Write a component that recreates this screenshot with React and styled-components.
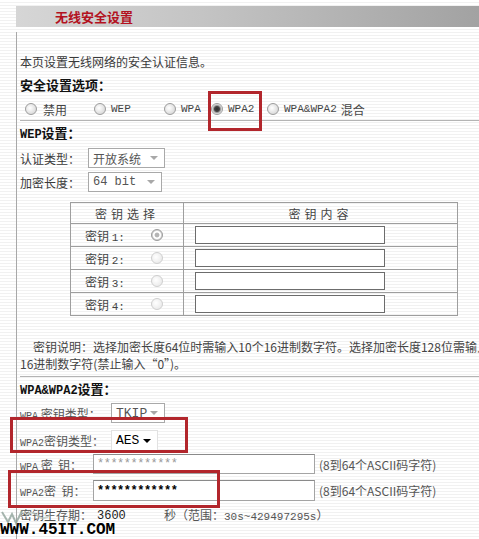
import React from "react";
import styled, { createGlobalStyle } from "styled-components";

const Global = createGlobalStyle`
  html, body { margin: 0; padding: 0; background: #fff; }
  body { width: 479px; height: 539px; overflow: hidden; }
`;

const CJK = `"Noto Sans CJK SC", "Noto Sans", sans-serif`;
const MONO = `"Liberation Mono", "Noto Sans CJK SC", monospace`;

const Page = styled.div`
  position: relative;
  width: 479px;
  height: 539px;
  overflow: hidden;
  box-sizing: border-box;
  padding-top: 6px;
  background: repeating-linear-gradient(to bottom, #ffffff 0, #ffffff 2px, #f1f1f1 2px, #f1f1f1 3px);
  font-family: ${CJK};
  font-size: 12px;
  color: #3a3a3a;
`;

const Header = styled.div`
  margin-left: 16px;
  height: 21px;
  display: flex;
  align-items: center;
  padding-left: 39px;
  background: linear-gradient(to right, #d6d6d6 0%, #c4c4c4 40%, #a2a2a2 100%);
`;

const Title = styled.span`
  color: #b3121f;
  font-weight: bold;
  font-size: 13px;
  line-height: 21px;
`;

const Body = styled.div`
  margin: 5px 0 0 16px;
  border-left: 1px solid #a8a8a8;
  padding: 20px 0 0 3px;
  height: 520px;
`;

const Line = styled.div`
  height: ${(p) => p.$h || 20}px;
  margin-top: ${(p) => p.$mt || 0}px;
  line-height: ${(p) => p.$h || 20}px;
  white-space: nowrap;
`;

const Heading = styled.div`
  height: ${(p) => p.$h || 20}px;
  margin-top: ${(p) => p.$mt || 0}px;
  line-height: ${(p) => p.$h || 20}px;
  font-weight: bold;
  font-size: 13px;
  color: #111;
`;

const Lat = styled.span`
  font-family: ${MONO};
  font-size: ${(p) => p.$size || 11}px;
  font-weight: ${(p) => (p.$bold ? "bold" : "normal")};
`;

const RadioRow = styled.div`
  display: flex;
  align-items: center;
  height: 22px;
  margin-top: 2px;
  padding-left: 5px;
  border-bottom: 1px solid #b4b4b4;
`;

const Option = styled.label`
  display: flex;
  align-items: center;
  gap: 4px;
  width: ${(p) => (p.$w ? `${p.$w}px` : "auto")};
  color: #444;
`;

const Radio = styled.span`
  display: inline-block;
  box-sizing: border-box;
  width: 12px;
  height: 12px;
  border-radius: 50%;
  border: 1px solid ${(p) => (p.$faded ? "#cfcfcf" : "#9c9c9c")};
  background: ${(p) =>
    p.$checked
      ? "radial-gradient(circle, #2c2c2c 0, #444 2.5px, #9a9a9a 3.5px, #eeeeee 5px)"
      : p.$soft
      ? "radial-gradient(circle, #b5b5b5 0, #b5b5b5 2px, #ffffff 2.8px, #ffffff 3.6px, #d2d2d2 4.6px)"
      : p.$faded
      ? "radial-gradient(circle at 40% 40%, #ffffff 0, #ececec 6px)"
      : "radial-gradient(circle at 40% 40%, #ffffff 0, #dcdcdc 6px)"};
  margin-right: ${(p) => p.$mr || 0}px;
`;

const FieldRow = styled.div`
  display: flex;
  align-items: center;
  height: ${(p) => p.$h || 20}px;
  margin-top: ${(p) => p.$mt || 0}px;
  white-space: nowrap;
`;

const Label = styled.span`
  width: ${(p) => p.$w}px;
  flex: none;
  color: ${(p) => p.$c || "#3a3a3a"};
`;

const Select = styled.div`
  display: flex;
  align-items: center;
  justify-content: space-between;
  box-sizing: border-box;
  width: ${(p) => p.$w}px;
  height: ${(p) => p.$h || 20}px;
  padding: 0 6px 0 4px;
  border: 1px solid ${(p) => (p.$plain ? "#e2e2e2" : "#a9a9a9")};
  background: #fff;
  color: ${(p) => (p.$dark ? "#000" : "#555")};
`;

const Arrow = styled.span`
  width: 0;
  height: 0;
  border-left: 4px solid transparent;
  border-right: 4px solid transparent;
  border-top: 4px solid ${(p) => (p.$dark ? "#000" : "#a8a8a8")};
`;

const KeyTable = styled.table`
  margin: 10px 0 0 50px;
  width: 388px;
  border-collapse: collapse;
  border: 1px solid #9e9e9e;
  table-layout: fixed;
`;

const Th = styled.td`
  height: 20px;
  padding: 0;
  border: 1px solid #9e9e9e;
  text-align: center;
  letter-spacing: 4px;
  color: #444;
  width: ${(p) => (p.$w ? `${p.$w}px` : "auto")};
`;

const Td = styled.td`
  height: 22px;
  padding: 0;
  border: 1px solid #9e9e9e;
  color: #444;
`;

const KeyCell = styled.div`
  display: flex;
  align-items: center;
  justify-content: space-between;
  padding: 0 20px 0 14px;
`;

const KeyInput = styled.div`
  margin-left: 11px;
  box-sizing: border-box;
  width: 190px;
  height: 18px;
  border: 1px solid #6c6c6c;
  background: #fff;
`;

const Para = styled.div`
  margin-top: 22px;
  line-height: 17px;
  padding-bottom: 4px;
  border-bottom: 1px solid #b4b4b4;
  white-space: nowrap;
  color: #444;
`;

const Indent = styled.span`
  padding-left: 13px;
`;

const TextInput = styled.div`
  display: flex;
  align-items: center;
  box-sizing: border-box;
  width: 222px;
  height: ${(p) => p.$h || 20}px;
  padding-left: 3px;
  border: 1px solid #a4a4a4;
  border-top-color: #8a8a8a;
  background: #fff;
  color: ${(p) => (p.$dark ? "#000" : "#999")};
  font-family: ${MONO};
  font-weight: ${(p) => (p.$dark ? "bold" : "normal")};
  font-size: 12px;
  letter-spacing: -0.5px;
`;

const Hint = styled.span`
  margin-left: 4px;
  color: #555;
`;

const Plain = styled.span`
  width: ${(p) => (p.$w ? `${p.$w}px` : "auto")};
  flex: none;
  color: #222;
`;

const Mark = styled.div`
  position: absolute;
  left: ${(p) => p.$x}px;
  top: ${(p) => p.$y}px;
  width: ${(p) => p.$w}px;
  height: ${(p) => p.$h}px;
  box-sizing: border-box;
  border: 3px solid #b2262c;
  pointer-events: none;
`;

const Watermark = styled.div`
  position: absolute;
  left: 0;
  bottom: 0;
  font-family: "Liberation Mono", monospace;
  font-weight: bold;
  font-size: 16px;
  color: #000;
  line-height: 17px;
`;

const Logo = styled.svg`
  position: absolute;
  left: 0;
  top: 506px;
`;

const options = [
  { label: "禁用", w: 69, cjk: true },
  { label: "WEP", w: 70 },
  { label: "WPA", w: 47 },
  { label: "WPA2", w: 56, checked: true },
  { label: "WPA&WPA2", extra: "混合" },
];

export default function App() {
  return (
    <>
      <Global />
      <Page>
        <Header>
          <Title>无线安全设置</Title>
        </Header>
        <Body>
          <Line>本页设置无线网络的安全认证信息。</Line>
          <Heading $h={22} $mt={2}>安全设置选项：</Heading>
          <RadioRow>
            {options.map((o) => (
              <Option key={o.label} $w={o.w}>
                <Radio $checked={o.checked} $mr={o.cjk ? 2 : 1} />
                {o.cjk ? o.label : <Lat>{o.label}</Lat>}
                {o.extra}
              </Option>
            ))}
          </RadioRow>
          <Heading $h={20} $mt={2}>
            <Lat $bold $size={12}>WEP</Lat>设置：
          </Heading>
          <FieldRow $mt={5}>
            <Label $w={68}>认证类型：</Label>
            <Select $w={77}>
              开放系统
              <Arrow />
            </Select>
          </FieldRow>
          <FieldRow $mt={4}>
            <Label $w={68}>加密长度：</Label>
            <Select $w={74}>
              <Lat $size={12}>64 bit</Lat>
              <Arrow />
            </Select>
          </FieldRow>
          <KeyTable>
            <tbody>
              <tr>
                <Th $w={112}>密钥选择</Th>
                <Th>密钥内容</Th>
              </tr>
              {[1, 2, 3, 4].map((n) => (
                <tr key={n}>
                  <Td>
                    <KeyCell>
                      <span>
                        密钥 <Lat>{n}:</Lat>
                      </span>
                      <Radio $soft={n === 1} $faded={n !== 1} />
                    </KeyCell>
                  </Td>
                  <Td>
                    <KeyInput />
                  </Td>
                </tr>
              ))}
            </tbody>
          </KeyTable>
          <Para>
            <div>
              <Indent>密钥说明：选择加密长度64位时需输入10个16进制数字符。选择加密长度128位需输入</Indent>
            </div>
            <div>16进制数字符(禁止输入“0”)。</div>
          </Para>
          <Heading $h={20} $mt={2}>
            <Lat $bold $size={12}>WPA&amp;WPA2</Lat>设置：
          </Heading>
          <FieldRow $mt={4}>
            <Label $w={91} $c="#555">
              <Lat $size={10}>WPA</Lat> 密钥类型：
            </Label>
            <Select $w={54}>
              <Lat $size={13}>TKIP</Lat>
              <Arrow />
            </Select>
          </FieldRow>
          <FieldRow $mt={7} $h={21}>
            <Label $w={91} $c="#555">
              <Lat $size={10}>WPA2</Lat>密钥类型：
            </Label>
            <Select $w={47} $h={21} $dark $plain>
              <Lat $size={13}>AES</Lat>
              <Arrow $dark />
            </Select>
          </FieldRow>
          <FieldRow $mt={3}>
            <Label $w={73} $c="#555">
              <Lat $size={10}>WPA</Lat> 密&nbsp;&nbsp;钥：
            </Label>
            <TextInput>************</TextInput>
            <Hint>(8到64个ASCII码字符)</Hint>
          </FieldRow>
          <FieldRow $mt={6} $h={21}>
            <Label $w={73} $c="#555">
              <Lat $size={10}>WPA2</Lat>密&nbsp;&nbsp;钥：
            </Label>
            <TextInput $h={21} $dark>************</TextInput>
            <Hint>(8到64个ASCII码字符)</Hint>
          </FieldRow>
          <FieldRow $mt={3}>
            <Label $w={77} $c="#555">密钥生存期：</Label>
            <Plain $w={63}>
              <Lat $size={12}>3600</Lat>
            </Plain>
            <Hint>
              秒（范围：<Lat>30s~429497295s</Lat>）
            </Hint>
          </FieldRow>
        </Body>
        <Logo width="60" height="22" viewBox="0 0 60 22">
          <path d="M2 6 L8 16 L12 8 L16 17 L22 5" fill="none" stroke="#8fa39a" strokeWidth="2" opacity="0.8" />
          <path d="M26 9 Q32 4 38 10 Q44 15 50 9" fill="none" stroke="#b9c4bc" strokeWidth="2" opacity="0.7" />
        </Logo>
        <Watermark>WWW.45IT.COM</Watermark>
        <Mark $x={208} $y={91} $w={54} $h={40} />
        <Mark $x={10} $y={417} $w={178} $h={36} />
        <Mark $x={8} $y={470} $w={212} $h={38} />
      </Page>
    </>
  );
}
